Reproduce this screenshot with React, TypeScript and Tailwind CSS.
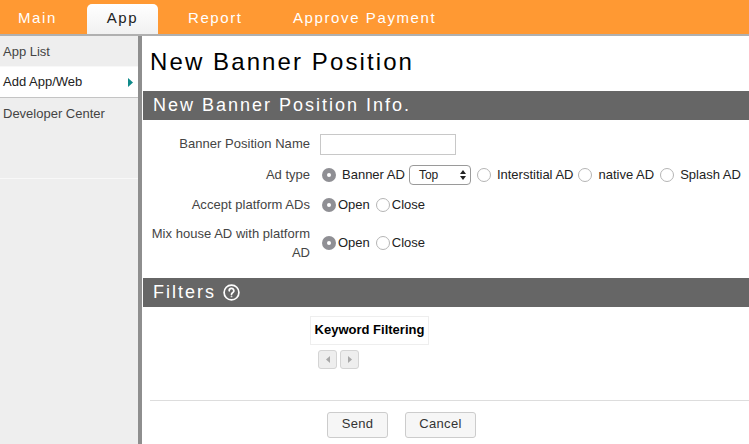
const font = { fontFamily: '"Liberation Sans", Arial, sans-serif' }

function Radio({ on = false }: { on?: boolean }) {
  if (on) {
    return (
      <span className="grid h-[14px] w-[14px] shrink-0 place-items-center rounded-full bg-[#8f8f94]">
        <span className="h-[4px] w-[4px] rounded-full bg-white" />
      </span>
    )
  }
  return <span className="h-[14px] w-[14px] shrink-0 rounded-full border border-[#b5b5b5] bg-white" />
}

function OpenClose() {
  return (
    <div className="flex items-center text-[13px] text-[#222]">
      <Radio on />
      <span className="ml-[2px]">Open</span>
      <span className="ml-[6px]" />
      <Radio />
      <span className="ml-[2px]">Close</span>
    </div>
  )
}

function SectionBar({ children }: { children: React.ReactNode }) {
  return (
    <div className="flex h-[29px] items-center bg-[#666666] pl-[10px] text-[18px] tracking-[2px] text-white">
      {children}
    </div>
  )
}

export default function App() {
  return (
    <div className="flex h-[444px] w-[749px] flex-col overflow-hidden bg-white" style={font}>
      <div className="flex h-[36px] shrink-0 items-end border-b-2 border-[#b0b0b0] bg-[#ff9933] text-[15px] tracking-[1.6px] text-white">
        <div className="flex h-[30px] w-[87px] items-center pb-[1px] pl-[18px]">Main</div>
        <div className="flex h-[30px] w-[71px] items-center justify-center rounded-t-[5px] bg-gradient-to-b from-white to-[#f1f1f1] pb-[1px] text-[#222]">
          App
        </div>
        <div className="flex h-[30px] w-[134px] items-center pb-[1px] pl-[30px]">Report</div>
        <div className="flex h-[30px] items-center pb-[1px] pl-[1px]">Approve Payment</div>
      </div>
      <div className="flex min-h-0 flex-1">
        <div className="w-[138px] shrink-0 bg-[#eeeeee] text-[13px]">
          <div className="flex h-[31px] items-center border-b border-[#f8f8f8] pt-[1px] pl-[3px] text-[#444]">App List</div>
          <div className="flex h-[31px] items-center justify-between border-b border-[#c4c4c4] bg-white pr-[5px] pl-[3px] text-[#222]">
            <span>Add App/Web</span>
            <svg width="5" height="9" viewBox="0 0 5 9">
              <path d="M0 0 L5 4.5 L0 9 Z" fill="#0f8a8a" />
            </svg>
          </div>
          <div className="h-[81px] border-b border-[#f8f8f8] pt-[6px] pl-[3px] text-[#444]">Developer Center</div>
        </div>
        <div className="w-[4px] shrink-0 bg-[#8e8e8e]" />
        <div className="min-w-0 flex-1 pl-[1px]">
          <h1 className="h-[55px] pt-[9px] pl-[7px] text-[24px] leading-[34px] tracking-[2.1px] text-black">
            New Banner Position
          </h1>
          <SectionBar>New Banner Position Info.</SectionBar>
          <div className="pt-[13px] text-[13px] text-[#444]">
            <div className="flex h-[22px] items-center">
              <div className="w-[167px] text-right tracking-[0.03px]">Banner Position Name</div>
              <div className="ml-[10px] h-[21px] w-[136px] border border-[#c8c8c8] bg-white" />
            </div>
            <div className="mt-[9px] flex h-[21px] items-center">
              <div className="w-[167px] text-right">Ad type</div>
              <div className="ml-[12px] flex items-center text-[#222]">
                <Radio on />
                <span className="ml-[6px]">Banner AD</span>
                <div className="ml-[4px] flex h-[20px] w-[62px] items-center justify-between rounded-[4px] border border-[#9a9a9a] bg-white pr-[4px] pl-[9px] text-[12px]">
                  <span>Top</span>
                  <svg width="6" height="10" viewBox="0 0 6 10">
                    <path d="M3 0 L6 4 L0 4 Z M3 10 L0 6 L6 6 Z" fill="#222" />
                  </svg>
                </div>
                <span className="ml-[6px]" />
                <Radio />
                <span className="ml-[6px]">Interstitial AD</span>
                <span className="ml-[5px]" />
                <Radio />
                <span className="ml-[6px]">native AD</span>
                <span className="ml-[6px]" />
                <Radio />
                <span className="ml-[6px]">Splash AD</span>
              </div>
            </div>
            <div className="mt-[9px] flex h-[21px] items-center">
              <div className="w-[167px] text-right tracking-[0.03px]">Accept platform ADs</div>
              <div className="ml-[12px]">
                <OpenClose />
              </div>
            </div>
            <div className="mt-[9px] flex items-center">
              <div className="w-[167px] text-right leading-[19px] tracking-[0.03px]">Mix house AD with platform AD</div>
              <div className="ml-[12px]">
                <OpenClose />
              </div>
            </div>
          </div>
          <div className="mt-[16px]">
            <SectionBar>
              <span>Filters</span>
              <svg className="ml-[7px]" width="17" height="17" viewBox="0 0 17 17" fill="none" stroke="white" strokeWidth="1.7">
                <circle cx="8.5" cy="8.5" r="7.4" />
                <path d="M6.2 6.8 A2.3 2.3 0 1 1 9.6 8.7 C8.8 9.2 8.5 9.6 8.5 10.6" strokeLinecap="round" />
                <path d="M8.5 12.2 V13.2" />
              </svg>
            </SectionBar>
          </div>
          <div className="pt-[9px] pl-[167px]">
            <div className="flex h-[29px] w-[119px] items-center justify-center border border-[#eeeeee] pb-[1px] text-[13px] font-bold text-black">
              Keyword Filtering
            </div>
            <div className="mt-[5px] ml-[8px] flex gap-[3px]">
              <div className="grid h-[19px] w-[19px] place-items-center rounded-[3px] border border-[#d4d4d4] bg-[#eeeeee]">
                <svg width="4" height="7" viewBox="0 0 4 7">
                  <path d="M4 0 L0 3.5 L4 7 Z" fill="#a8a8a8" />
                </svg>
              </div>
              <div className="grid h-[19px] w-[19px] place-items-center rounded-[3px] border border-[#d4d4d4] bg-[#eeeeee]">
                <svg width="4" height="7" viewBox="0 0 4 7">
                  <path d="M0 0 L4 3.5 L0 7 Z" fill="#a8a8a8" />
                </svg>
              </div>
            </div>
          </div>
          <div className="mt-[31px] ml-[7px] flex gap-[17px] border-t border-[#dddddd] pt-[11px] pl-[177px] text-[13px] tracking-[0.3px] text-[#333]">
            <div className="flex h-[26px] w-[61px] items-center justify-center rounded-[3px] border border-[#cccccc] bg-[#f6f6f6] pb-[3px]">Send</div>
            <div className="flex h-[26px] w-[71px] items-center justify-center rounded-[3px] border border-[#cccccc] bg-[#f6f6f6] pb-[3px]">Cancel</div>
          </div>
        </div>
      </div>
    </div>
  )
}
